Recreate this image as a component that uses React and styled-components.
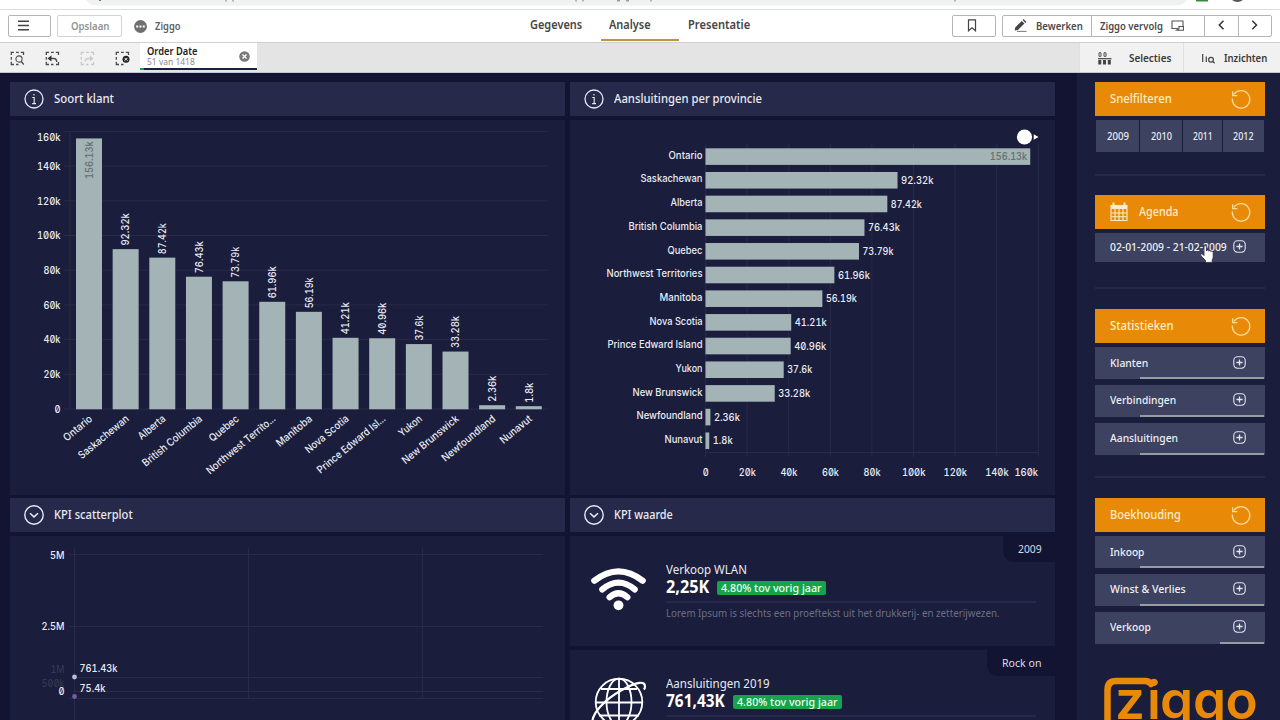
import React, { useLayoutEffect, useRef, useState } from "react";
import styled, { createGlobalStyle } from "styled-components";

const c = {
  gap: "#131432",
  panel: "#1a1d3b",
  head: "#262949",
  item: "#3c4260",
  orange: "#e88a08",
  bar: "#a3b3b6",
  line: "#272b49",
  text: "#e9ebf3",
};

const Global = createGlobalStyle`
  * { box-sizing: border-box; }
  body { margin: 0; background: ${c.gap}; overflow: hidden; font-family: "Noto Sans", "Open Sans", sans-serif; }
  svg { display: block; flex: none; }
`;

/* Text condensed or widened so that it is `w` pixels wide. */
const FitBox = styled.span`
  display: block;
  flex: none;
  width: ${(p) => p.$w}px;
  white-space: nowrap;
`;
const FitText = styled.span`
  display: block;
  width: max-content;
  transform-origin: 0 50%;
`;
function Fit({ w, children }) {
  const ref = useRef(null);
  const [scale, setScale] = useState(1);
  useLayoutEffect(() => {
    setScale(w / ref.current.offsetWidth);
  }, [w]);
  return (
    <FitBox $w={w}>
      <FitText ref={ref} style={{ transform: `scaleX(${scale})` }}>{children}</FitText>
    </FitBox>
  );
}

const Page = styled.div`
  width: 1280px;
  height: 720px;
  overflow: hidden;
  display: flex;
  flex-direction: column;
  background: ${c.gap};
`;

/* ---------- browser edge ---------- */
const BrowserEdge = styled.div`
  height: 10px;
  flex: none;
  background: #fff;
  border-bottom: 1px solid #dcdddd;
`;

/* ---------- top toolbar ---------- */
const TopBar = styled.header`
  height: 33px;
  flex: none;
  display: grid;
  grid-template-columns: 530px 1fr 328px;
  background: #fff;
  border-bottom: 1px solid #cfcfcf;
  color: #4a4a4a;
  font-size: 11px;
  font-weight: 600;
`;
const TopLeft = styled.div`
  display: flex;
  align-items: center;
  padding-left: 8px;
`;
const Btn = styled.div`
  height: 22px;
  width: ${(p) => p.$w}px;
  margin-right: ${(p) => p.$mr || 0}px;
  padding-left: ${(p) => p.$pl || 0}px;
  padding-bottom: 2px;
  display: flex;
  align-items: center;
  border: 1px solid ${(p) => (p.$soft ? "#d2d2d2" : "#b4b4b4")};
  border-radius: 2px;
  color: ${(p) => (p.$soft ? "#949494" : "inherit")};
`;
const AppName = styled.div`
  margin-left: 8px;
  padding-bottom: 2px;
  color: #606060;
`;
const Tabs = styled.nav`
  display: flex;
  font-size: 12px;
  color: #454545;
`;
const Tab = styled.div`
  width: ${(p) => p.$w}px;
  height: 31px;
  padding: 6px 0 0 ${(p) => p.$pl || 0}px;
  line-height: 17px;
  border-bottom: 2px solid ${(p) => (p.$on ? "#c3933a" : "transparent")};
`;
const TopRight = styled.div`
  display: flex;
  align-items: center;
`;
const Group = styled.div`
  height: 22px;
  display: flex;
  border: 1px solid #b4b4b4;
  border-radius: 2px;
`;
const GroupCell = styled.div`
  width: ${(p) => p.$w}px;
  padding-left: ${(p) => p.$pl}px;
  padding-bottom: 2px;
  display: flex;
  align-items: center;
  gap: ${(p) => p.$gap || 0}px;
  & + & { border-left: 1px solid #b4b4b4; }
`;

/* ---------- selection bar ---------- */
const SelectionBar = styled.div`
  height: 30px;
  flex: none;
  display: flex;
  background: #e4e4e4;
  border-bottom: 1px solid #c3c7d6;
`;
const SelTools = styled.div`
  width: 140px;
  padding: 1px 0 0 10px;
  display: flex;
  align-items: center;
  gap: 20px;
  background: #f1f1f1;
`;
const FieldPill = styled.div`
  width: 117px;
  height: 27px;
  padding: 1px 7px 0 6.5px;
  display: flex;
  justify-content: space-between;
  background: #fff;
  border-bottom: 2px solid;
  border-image: linear-gradient(to right, #1e9d55 5px, #17223f 5px) 1;
`;
const FieldName = styled.div`
  font-size: 10.5px;
  line-height: 14px;
  font-weight: 600;
  color: #222;
`;
const FieldCount = styled.div`
  font-size: 9px;
  line-height: 8px;
  color: #8a8a8a;
`;
const PillClose = styled.div`padding-top: 7px;`;
const SelActions = styled.div`
  margin-left: auto;
  width: 201px;
  display: flex;
  background: #f1f1f1;
  font-size: 10.5px;
  font-weight: 600;
  color: #3a3a3a;
`;
const SelAction = styled.div`
  width: ${(p) => p.$w}px;
  padding: 1px 0 0 18px;
  display: flex;
  align-items: center;
  gap: ${(p) => p.$gap}px;
  border-left: 1px solid #e0e0e0;
`;

/* ---------- dashboard ---------- */
const Board = styled.main`
  flex: 1;
  min-height: 0;
  display: flex;
`;
const Column = styled.section`
  width: ${(p) => p.$w}px;
  margin-left: ${(p) => p.$ml}px;
  padding-top: 9px;
  flex: none;
`;
const PanelHead = styled.div`
  height: 34px;
  margin-bottom: 4px;
  padding: 0 0 1px 14px;
  display: flex;
  align-items: center;
  gap: 10px;
  background: ${c.head};
  color: ${c.text};
  font-size: 12px;
  font-weight: 500;
`;
const PanelBody = styled.div`
  height: ${(p) => p.$h}px;
  margin-bottom: ${(p) => p.$mb || 0}px;
  background: ${c.panel};
`;
const ChartSvg = styled.svg`
  font-family: Inter, sans-serif;
  font-feature-settings: "zero" 1, "tnum" 1;
  font-size: 10.5px;
  font-weight: 500;
`;

/* ---------- KPI cards ---------- */
const Card = styled.div`
  height: 110px;
  margin-bottom: 4px;
  display: flex;
  position: relative;
  background: ${c.panel};
`;
const CardTag = styled.div`
  position: absolute;
  top: -1px;
  right: 0;
  height: 27px;
  padding: 0 13.5px 1px 15.5px;
  display: flex;
  align-items: center;
  background: ${c.gap};
  border-bottom-left-radius: 11px;
  color: #d9dbe6;
  font-size: 11px;
`;
const CardIcon = styled.div`
  width: 96px;
  padding: ${(p) => p.$pt}px 0 0 20px;
  flex: none;
  height: 110px;
  overflow: hidden;
`;
const CardInfo = styled.div`
  width: 370px;
  padding-top: 26px;
  color: ${c.text};
`;
const CardTitle = styled.div`
  font-size: 12.5px;
  line-height: 16px;
`;
const CardFigure = styled.div`
  height: 25px;
  display: flex;
  gap: 8px;
  border-bottom: 2px solid ${c.head};
  font-size: 17px;
  line-height: 18px;
  font-weight: 700;
  color: #fff;
`;
const Badge = styled.span`
  height: 14px;
  margin-top: 3px;
  padding: 0 4px;
  border-radius: 2px;
  background: #16a34c;
  color: #e9fff1;
  font-size: 11px;
  line-height: 13.5px;
  font-weight: 500;
`;
const CardNote = styled.div`
  padding-top: 2px;
  font-size: 10.5px;
  line-height: 16px;
  color: #6c6f86;
`;

/* ---------- side bar ---------- */
const Side = styled.aside`
  width: 203px;
  margin-left: 22px;
  padding: 9px 15px 0 18px;
  flex: none;
  background: ${c.panel};
`;
const SideHead = styled.div`
  height: 34px;
  margin-bottom: 4px;
  padding: 0 14.5px 1px 15px;
  display: flex;
  align-items: center;
  background: ${c.orange};
  color: #fdecc8;
  font-size: 12px;
  font-weight: 500;
  svg:last-child { margin-left: auto; }
`;
const HeadIcon = styled.span`margin-right: 10.5px;`;
const Years = styled.div`
  height: 32px;
  margin: 0 1px;
  display: grid;
  grid-template-columns: 43px 42px 39px 41px;
  gap: 1px;
`;
const Year = styled.div`
  display: flex;
  align-items: center;
  justify-content: center;
  background: ${c.item};
  color: ${c.text};
  font-size: 10.5px;
  font-weight: 500;
`;
const Rule = styled.div`
  height: 2px;
  margin: ${(p) => p.$t}px 0 ${(p) => p.$b}px;
  background: #262a49;
`;
const Item = styled.div`
  height: ${(p) => p.$h || 32}px;
  margin-bottom: ${(p) => (p.$last ? 0 : 5.75)}px;
  padding: 0 19.5px 2px 14.5px;
  display: flex;
  align-items: center;
  justify-content: space-between;
  color: #eef0f6;
  font-size: 11.5px;
  font-weight: 500;
  background: ${(p) =>
    p.$from
      ? `linear-gradient(#979da0, #979da0) ${p.$from}px 100% / ${169 - p.$from}px 2px no-repeat, ${c.item}`
      : c.item};
`;
const Logo = styled.div`padding: 33px 0 0 8px;`;
const Pointer = styled.div`
  position: absolute;
  left: 1200px;
  top: 245px;
`;

/* ---------- icons ---------- */
const InfoIcon = () => (
  <svg width="20" height="20" viewBox="0 0 20 20" fill="none" stroke={c.text} strokeWidth="1.3">
    <circle cx="10" cy="10" r="9" />
    <path d="M8.3 8.5h1.9v6M8.2 14.6h3.8" strokeWidth="1.1" />
    <circle cx="10" cy="5.7" r="0.8" fill={c.text} stroke="none" />
  </svg>
);
const DownIcon = () => (
  <svg width="20" height="20" viewBox="0 0 20 20" fill="none" stroke={c.text} strokeWidth="1.4">
    <circle cx="10" cy="10" r="9.2" />
    <path d="M6 8.3l4 3.6 4-3.6" strokeWidth="1.5" />
  </svg>
);
const ResetIcon = () => (
  <svg width="20" height="20" viewBox="0 0 20 20" fill="none" stroke="#fddc9a" strokeWidth="1.3">
    <path d="M1.4 9.5A8.7 8.7 0 1 0 3 5.3" />
    <path d="M1.7 2.2v4.5h4.6" />
  </svg>
);
const PlusIcon = () => (
  <svg width="13" height="13" viewBox="0 0 13 13" fill="none" stroke="#e4e6ef" strokeWidth="1.1">
    <rect x="0.8" y="0.8" width="11.4" height="11.4" rx="3.6" />
    <path d="M6.5 3.4v6.2M3.4 6.5h6.2" strokeWidth="1.3" />
  </svg>
);
const CalendarIcon = () => (
  <svg width="18" height="20" viewBox="0 0 18 20" fill="#fdecc8">
    <path d="M0.5 3h2v-2.500h2v2.500h9v-2.500h2v2.500h2v4h-17z" />
    <path d="M1 7v11.500h16v-11.500M1 11h16M1 14.800h16M5 7v11.500M9 7v11.500M13 7v11.500" fill="none" stroke="#fdecc8" strokeWidth="1.100" />
  </svg>
);
const DashedBox = ({ color = "#4c4c4c", children }) => (
  <svg width="15" height="15" viewBox="0 0 15 15" fill="none" stroke={color} strokeWidth="1.3">
    <path d="M1.300 4V1.300H4M6 1.300h2.800M10.800 1.300h2.700V4M1.300 6v2.800M1.300 10.800v2.700H4M6 13.500h2.500" />
    {children}
  </svg>
);
const WifiIcon = () => (
  <svg width="57" height="44" viewBox="590 567 57 44" fill="none" stroke="#fff" strokeWidth="6.200" strokeLinecap="round">
    <path d="M594.300 580.700Q618.500 562 642.700 580.700" />
    <path d="M602.300 589.400Q618.500 575.800 634.700 589.400" />
    <path d="M609.600 597.200Q618.500 589.200 627.400 597.200" />
    <circle cx="618.500" cy="605.300" r="4.900" fill="#fff" stroke="none" />
  </svg>
);
const GlobeIcon = () => (
  <svg width="57" height="50" viewBox="590 677 57 50" fill="none" stroke="#fff" strokeWidth="1.800">
    <circle cx="619" cy="702" r="23.300" />
    <ellipse cx="619" cy="702" rx="12.500" ry="23.300" />
    <path d="M619 679v46M601 689h36M595.500 702.500h47M599 715.500h40" />
    <path d="M592.500 722C592 714 604 700 621 690.500S645 681 645 686.500q0 2-1.200 3" strokeWidth="2.200" />
  </svg>
);

/* ---------- data ---------- */
const provinces = [
  ["Ontario", 156.13, 34, 37.5],
  ["Saskachewan", 92.32, 62, 32.5],
  ["Alberta", 87.42, 32, 31],
  ["British Columbia", 76.43, 74, 32],
  ["Quebec", 73.79, 35, 31],
  ["Northwest Territories", 61.96, 96, 32],
  ["Manitoba", 56.19, 43, 31],
  ["Nova Scotia", 41.21, 53, 32],
  ["Prince Edward Island", 40.96, 95, 32],
  ["Yukon", 37.6, 27, 25],
  ["New Brunswick", 33.28, 70, 32],
  ["Newfoundland", 2.36, 66, 26],
  ["Nunavut", 1.8, 38, 20],
];
const shortened = {
  "Northwest Territories": ["Northwest Territo...", 86],
  "Prince Edward Island": ["Prince Edward Isl...", 85],
};
const ticks = [0, 20, 40, 60, 80, 100, 120, 140, 160];
const tickLabel = (t) => (t ? `${t}k` : "0");
const tickWidth = (t) => (t === 0 ? 6 : t < 100 ? 17 : 23.5);

const T = ({ w, fill = c.text, children, ...rest }) => (
  <text fill={fill} textLength={w} lengthAdjust="spacingAndGlyphs" {...rest}>
    {children}
  </text>
);

function CustomerChart() {
  return (
    <ChartSvg width="555" height="375" viewBox="10 120 555 375">
      <g stroke={c.line}>
        <path d="M70 131V409" />
        {ticks.map((t) => (
          <path key={t} d={`M64 ${409 - t * 1.735}H548`} />
        ))}
      </g>
      {ticks.map((t) => (
        <T key={t} x="60.5" y={t === 160 ? 140.5 : 412.8 - t * 1.735} w={tickWidth(t)} textAnchor="end">
          {tickLabel(t)}
        </T>
      ))}
      {provinces.map(([name, v, w, vw], i) => {
        const x = 76 + i * 36.65;
        const top = 409.3 - v * 1.735;
        const [label, lw] = shortened[name] || [name, w];
        return (
          <g key={name}>
            <rect x={x} y={top} width="26" height={409.3 - top} fill={c.bar} />
            <T
              transform={`translate(${x + 16.8} ${i ? top - 3.500 : top + 3}) rotate(-90)`}
              textAnchor={i ? "start" : "end"}
              w={vw}
              fill={i ? c.text : "#64706f"}
            >
              {`${v}k`}
            </T>
            <T transform={`translate(${x + 17} 420) rotate(-39.500)`} textAnchor="end" w={lw}>
              {label}
            </T>
          </g>
        );
      })}
    </ChartSvg>
  );
}

function ProvinceChart() {
  return (
    <ChartSvg width="485" height="375" viewBox="570 120 485 375">
      <g stroke={c.line}>
        {ticks.map((t) => (
          <path key={t} d={`M${705.5 + t * 2.08} 144V457`} />
        ))}
        <path d="M705.500 452.500H1038" />
      </g>
      {ticks.map((t) => (
        <T
          key={t}
          x={t === 160 ? 1038 : 705.7 + t * 2.08}
          y="475.800"
          w={tickWidth(t)}
          textAnchor={t === 160 ? "end" : "middle"}
        >
          {tickLabel(t)}
        </T>
      ))}
      {provinces.map(([name, v, w, vw], i) => {
        const y = 148.3 + i * 23.68;
        const end = 705.5 + v * 2.08;
        return (
          <g key={name}>
            <rect x="705.500" y={y} width={end - 705.5} height="16.600" fill={c.bar} />
            <T x="702.500" y={y + 10.5} w={w} textAnchor="end">{name}</T>
            <T x={i ? end + 3.5 : end - 3} y={y + 12} w={vw} textAnchor={i ? "start" : "end"} fill={i ? c.text : "#64706f"}>
              {`${v}k`}
            </T>
          </g>
        );
      })}
      <circle cx="1024.500" cy="137" r="7.600" fill="#fff" />
      <path d="M1033.700 134.300l4.800 2.700-4.800 2.700z" fill="#fff" />
    </ChartSvg>
  );
}

function ScatterChart() {
  return (
    <ChartSvg width="555" height="185" viewBox="10 536 555 185">
      <g stroke={c.line}>
        <path d="M74.500 548V720M248.500 548V698M422.500 548V698" />
        <path d="M69 554.500H543M69 626.500H543M74 677.500H543M74 691.500H543M69 698.500H543" />
      </g>
      <T x="64.500" y="558.500" w="14.500" textAnchor="end">5M</T>
      <T x="64.500" y="630" w="23" textAnchor="end">2.5M</T>
      <T x="64.500" y="673" w="14" textAnchor="end" fill="#343852">1M</T>
      <T x="64.500" y="687" w="23" textAnchor="end" fill="#343852">500k</T>
      <T x="64.500" y="695" w="6" textAnchor="end">0</T>
      <circle cx="74.500" cy="677" r="2.400" fill="#b9bcd6" />
      <circle cx="74.500" cy="696.500" r="2.400" fill="#775f9b" />
      <T x="79.500" y="672" w="38" >761.43k</T>
      <T x="79.500" y="692" w="26">75.4k</T>
    </ChartSvg>
  );
}

const Kpi = ({ tag, tagW, icon, pt, title, titleW, value, valueW, note }) => (
  <Card>
    <CardIcon $pt={pt}>{icon}</CardIcon>
    <CardInfo>
      <CardTitle><Fit w={titleW}>{title}</Fit></CardTitle>
      <CardFigure>
        <Fit w={valueW}>{value}</Fit>
        <Badge><Fit w={101}>4.80% tov vorig jaar</Fit></Badge>
      </CardFigure>
      {note && <CardNote><Fit w={334}>{note}</Fit></CardNote>}
    </CardInfo>
    <CardTag><Fit w={tagW}>{tag}</Fit></CardTag>
  </Card>
);

export default function App() {
  return (
    <Page>
      <Global />
      <BrowserEdge>
        <svg width="1280" height="9" viewBox="0 0 1280 9">
          <path d="M86 0H1187Q1184 5.500 1174 5.500H98Q89 5.500 86 0z" fill="#eff1f3" />
          <path d="M99 0.500h2M226 0v1.500M233 0v1.500M576 0v1.500M583 0v1.500M617 0.800h3M626 0.800h3M651 0v1.500M955 0v1.500" stroke="#777" fill="none" />
          <path d="M1196 0h12v1.500h-12z" fill="#3a8a3a" />
          <path d="M1232 0h11q-5.500 4-11 0z" fill="#555" />
        </svg>
      </BrowserEdge>

      <TopBar>
        <TopLeft>
          <Btn $w={43} $mr={6} $pl={9}>
            <svg width="11" height="11" viewBox="0 0 11 11" stroke="#444" strokeWidth="1.4">
              <path d="M0 1.300h11M0 5.500h11M0 9.700h11" />
            </svg>
          </Btn>
          <Btn $w={65} $mr={11.5} $pl={12.5} $soft><Fit w={38.5}>Opslaan</Fit></Btn>
          <svg width="13" height="13" viewBox="0 0 13 13">
            <circle cx="6.500" cy="6.500" r="6.400" fill="#6f6f6f" />
            <path d="M2.200 6.500h2M5.500 6.500h2M8.800 6.500h2" stroke="#fff" strokeWidth="1.900" />
          </svg>
          <AppName><Fit w={25.5}>Ziggo</Fit></AppName>
        </TopLeft>
        <Tabs>
          <Tab $w={71}><Fit w={52}>Gegevens</Fit></Tab>
          <Tab $w={78} $pl={8} $on><Fit w={42}>Analyse</Fit></Tab>
          <Tab $w={80} $pl={9}><Fit w={62}>Presentatie</Fit></Tab>
        </Tabs>
        <TopRight>
          <Btn $w={44} $mr={6} $pl={14}>
            <svg width="10" height="13" viewBox="0 0 10 13" fill="none" stroke="#444" strokeWidth="1.2">
              <path d="M1.500 0.800h7v11l-3.500-3-3.500 3z" />
            </svg>
          </Btn>
          <Group>
            <GroupCell $w={88} $pl={11} $gap={9}>
              <svg width="13" height="13" viewBox="0 0 13 13" fill="#444">
                <path d="M1.200 8.400L7.800 1.900l2.700 2.700L3.900 11.100 0.700 11.600zM8.600 1.100l1-1 2.800 2.800-1 1z" />
                <path d="M3 12.400h9.500" stroke="#777" />
              </svg>
              <Fit w={47}>Bewerken</Fit>
            </GroupCell>
            <GroupCell $w={113} $pl={8} $gap={8}>
              <Fit w={63}>Ziggo vervolg</Fit>
              <svg width="13" height="11" viewBox="0 0 13 11" fill="none" stroke="#555" strokeWidth="1.1">
                <path d="M7 8.500H1V1h11v5" />
                <path d="M5.500 10.300h7V6.500h-4.500v2.200z" />
              </svg>
            </GroupCell>
            <GroupCell $w={34} $pl={13}>
              <svg width="7" height="10" viewBox="0 0 7 10" fill="none" stroke="#333" strokeWidth="1.500"><path d="M5.500 0.800L1.300 5l4.200 4.200" /></svg>
            </GroupCell>
            <GroupCell $w={33} $pl={12}>
              <svg width="7" height="10" viewBox="0 0 7 10" fill="none" stroke="#333" strokeWidth="1.500"><path d="M1.300 0.800L5.500 5 1.300 9.200" /></svg>
            </GroupCell>
          </Group>
        </TopRight>
      </TopBar>

      <SelectionBar>
        <SelTools>
          <DashedBox>
            <circle cx="9" cy="8" r="3.100" strokeWidth="1.100" />
            <path d="M11.200 10.500l2.600 3" />
          </DashedBox>
          <DashedBox>
            <path d="M4.500 7.500h4.500q2.500 0 2.800 3.500M13.500 11v2.500H11" strokeWidth="1.300" />
            <path d="M2.500 7.500l4-3.200v6.200z" fill="#333" stroke="none" />
          </DashedBox>
          <DashedBox color="#c9c9c9">
            <path d="M10 7.500H8q-2.500 0-2.800 3M13.500 11v2.500H11" />
            <path d="M13.500 7.500l-3.500-2.800v5.600z" fill="#c9c9c9" stroke="none" />
          </DashedBox>
          <DashedBox>
            <circle cx="11" cy="8.300" r="3.500" fill="#222" stroke="none" />
            <path d="M9.600 6.900l2.800 2.800M12.400 6.900l-2.800 2.800" stroke="#fff" strokeWidth="1" />
          </DashedBox>
        </SelTools>
        <FieldPill>
          <div>
            <FieldName><Fit w={50.5}>Order Date</Fit></FieldName>
            <FieldCount><Fit w={48}>51 van 1418</Fit></FieldCount>
          </div>
          <PillClose>
            <svg width="11" height="11" viewBox="0 0 11 11">
              <circle cx="5.500" cy="5.500" r="5.300" fill="#7b7b7b" />
              <path d="M3.500 3.500l4 4M7.500 3.500l-4 4" stroke="#fff" strokeWidth="1.400" />
            </svg>
          </PillClose>
        </FieldPill>
        <SelActions>
          <SelAction $w={104} $gap={17}>
            <svg width="14" height="13" viewBox="0 0 14 13" fill="none" stroke="#444">
              <path d="M1 0.800h2v3.500H1zM6 0.800h2v3.500H6z" strokeWidth="0.900" />
              <path d="M0 6.700h13.500" strokeWidth="1.200" />
              <path d="M0.300 10.300h3M5 10.300h3M9.800 10.300h3" strokeWidth="4.500" />
            </svg>
            <Fit w={42.5}>Selecties</Fit>
          </SelAction>
          <SelAction $w={97} $gap={9}>
            <svg width="13" height="11" viewBox="0 0 13 11" fill="none" stroke="#444" strokeWidth="1.200">
              <path d="M0.700 1v8M4.300 3.500v5.500" />
              <circle cx="9" cy="6.800" r="2.400" />
              <path d="M10.800 8.500l2 1.800" />
            </svg>
            <Fit w={43.5}>Inzichten</Fit>
          </SelAction>
        </SelActions>
      </SelectionBar>

      <Board>
        <Column $w={555} $ml={10}>
          <PanelHead><InfoIcon /><Fit w={60}>Soort klant</Fit></PanelHead>
          <PanelBody $h={375} $mb={3}><CustomerChart /></PanelBody>
          <PanelHead><DownIcon /><Fit w={79}>KPI scatterplot</Fit></PanelHead>
          <PanelBody $h={185}><ScatterChart /></PanelBody>
        </Column>

        <Column $w={485} $ml={5}>
          <PanelHead><InfoIcon /><Fit w={147.5}>Aansluitingen per provincie</Fit></PanelHead>
          <PanelBody $h={375} $mb={3}><ProvinceChart /></PanelBody>
          <PanelHead><DownIcon /><Fit w={59}>KPI waarde</Fit></PanelHead>
          <Kpi
            tag="2009" tagW={23.5} pt={31} icon={<WifiIcon />}
            title="Verkoop WLAN" titleW={81} value="2,25K" valueW={43}
            note="Lorem Ipsum is slechts een proeftekst uit het drukkerij- en zetterijwezen."
          />
          <Kpi
            tag="Rock on" tagW={39.5} pt={27} icon={<GlobeIcon />}
            title="Aansluitingen 2019" titleW={104} value="761,43K" valueW={59}
          />
        </Column>

        <Side>
          <SideHead><Fit w={62}>Snelfilteren</Fit><ResetIcon /></SideHead>
          <Years>
            <Year><Fit w={22}>2009</Fit></Year>
            <Year><Fit w={21}>2010</Fit></Year>
            <Year><Fit w={19.5}>2011</Fit></Year>
            <Year><Fit w={20.5}>2012</Fit></Year>
          </Years>
          <Rule $t={21.5} $b={19.5} />
          <SideHead><HeadIcon><CalendarIcon /></HeadIcon><Fit w={39.5}>Agenda</Fit><ResetIcon /></SideHead>
          <Item $h={29} $last><Fit w={117}>02-01-2009 - 21-02-2009</Fit><PlusIcon /></Item>
          <Rule $t={25} $b={20} />
          <SideHead><Fit w={64}>Statistieken</Fit><ResetIcon /></SideHead>
          <Item $from={45}><Fit w={38}>Klanten</Fit><PlusIcon /></Item>
          <Item $from={45}><Fit w={66}>Verbindingen</Fit><PlusIcon /></Item>
          <Item $from={45} $last><Fit w={68}>Aansluitingen</Fit><PlusIcon /></Item>
          <Rule $t={21.5} $b={20} />
          <SideHead><Fit w={71}>Boekhouding</Fit><ResetIcon /></SideHead>
          <Item $from={45}><Fit w={34.5}>Inkoop</Fit><PlusIcon /></Item>
          <Item $from={45}><Fit w={75.5}>Winst &amp; Verlies</Fit><PlusIcon /></Item>
          <Item $from={125} $last><Fit w={41}>Verkoop</Fit><PlusIcon /></Item>
          <Logo>
            <svg width="158" height="44" viewBox="1103 677 158 44">
              <path d="M1107.500 724V690Q1107.500 681 1116 681H1145Q1149 681 1151 684" fill="none" stroke={c.orange} strokeWidth="6.500" strokeLinecap="round" />
              <text y="718.800" x="1115 1147 1160 1193 1225.500" fill={c.orange} fontFamily="Inter, sans-serif" fontWeight="600" fontSize="53">ziggo</text>
            </svg>
          </Logo>
        </Side>
      </Board>

      <Pointer>
        <svg width="15" height="18" viewBox="0 0 15 18" fill="#fff" stroke="#23263f" strokeWidth="0.800">
          <path d="M4 10.500V1.800q0-1.200 1.200-1.200t1.200 1.200V6q0-.8 1.100-.8T8.700 6.200q.2-.6 1.100-.6t1.100 1q.3-.5 1-.5 1.300 0 1.300 1.500v4.200q0 1.600-1 3v2.600H5.500v-1.800L1 10.800q-.8-1.200 0-1.800t1.900.3z" />
        </svg>
      </Pointer>
    </Page>
  );
}
